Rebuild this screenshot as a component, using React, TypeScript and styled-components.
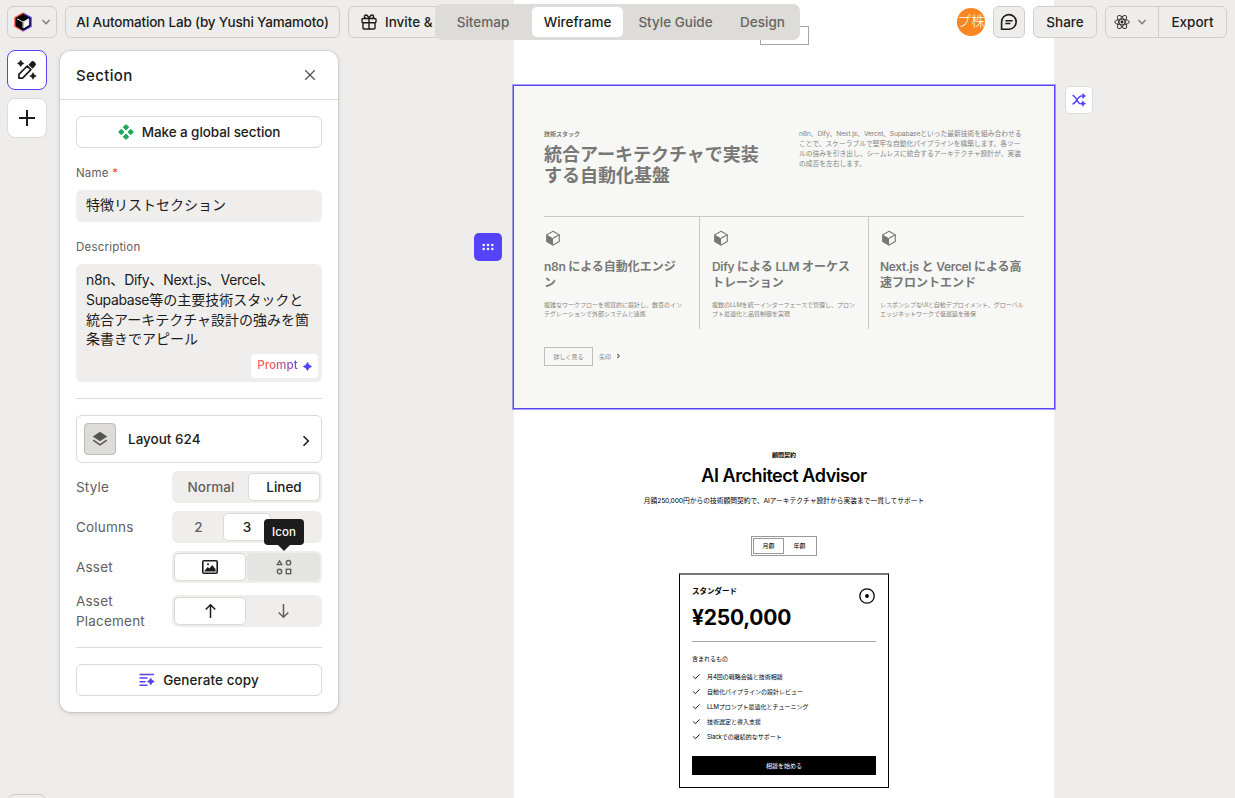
import React from "react";
import styled, { createGlobalStyle, css } from "styled-components";

const ui = `Inter, "Noto Sans CJK JP", sans-serif`;
const ink = "#1c1c1b";
const muted = "#61605e";
const accent = "#5443f8";
const canvasBg = "#eeedeb";

const GlobalStyle = createGlobalStyle`
  * { box-sizing: border-box; }
  body { margin: 0; overflow: hidden; background: ${canvasBg}; font-family: ${ui}; color: ${ink}; }
  button { font: inherit; color: inherit; margin: 0; padding: 0; background: none; border: 0; }
  h2, h3, p, ul { margin: 0; padding: 0; font-weight: inherit; font-size: inherit; }
  svg { display: block; flex: none; }
`;

const Shell = styled.div`
  position: relative;
  display: flex;
  width: 1235px;
  height: 798px;
  overflow: hidden;
  background: ${canvasBg};
`;

/* ---------- top bar ---------- */
const TopBar = styled.header`
  position: absolute;
  z-index: 5;
  inset: 0 0 auto 0;
  display: flex;
  align-items: center;
  gap: 8px;
  padding: 6px 8px 0 7px;
`;
const BarButton = styled.button<{ $w: number; $ls?: number }>`
  display: flex;
  align-items: center;
  justify-content: center;
  gap: 8px;
  width: ${(p) => p.$w}px;
  height: 32px;
  border: 1px solid #cfcecb;
  border-radius: 6px;
  background: ${canvasBg};
  font-size: 13.5px;
  font-weight: 500;
  letter-spacing: ${(p) => p.$ls ?? 0}px;
  white-space: nowrap;
`;
const InviteButton = styled(BarButton)`
  justify-content: flex-start;
  padding-left: 12px;
`;
const Spacer = styled.div`
  flex: 1;
`;
const Avatar = styled.div`
  display: flex;
  align-items: center;
  justify-content: center;
  width: 28px;
  height: 28px;
  border-radius: 50%;
  overflow: hidden;
  background: #f98620;
  color: #fff;
  font-size: 14px;
  font-weight: 300;
  line-height: 26px;
  padding-bottom: 2px;
  white-space: nowrap;
`;
const SplitButton = styled.div`
  display: flex;
  width: 122px;
  height: 32px;
  border: 1px solid #cfcecb;
  border-radius: 6px;
  background: ${canvasBg};
  font-size: 13.5px;
  font-weight: 500;
  letter-spacing: 0.1px;
`;
const SplitPart = styled.button<{ $w: number }>`
  display: flex;
  align-items: center;
  justify-content: center;
  gap: 7px;
  width: ${(p) => p.$w}px;
  padding-right: ${(p) => (p.$w < 60 ? 3 : 0)}px;
  & + & { border-left: 1px solid #cfcecb; }
`;
const Tabs = styled.nav`
  position: absolute;
  z-index: 6;
  left: 435px;
  top: 4px;
  display: flex;
  align-items: center;
  width: 365px;
  height: 36px;
  padding: 0 3px;
  border-radius: 7px;
  background: #dddcd8;
`;
const Tab = styled.button<{ $w: number; $active?: boolean; $shift?: number }>`
  width: ${(p) => p.$w}px;
  height: 30px;
  padding-right: ${(p) => p.$shift ?? 0}px;
  border-radius: 5px;
  font-size: 13.5px;
  font-weight: 500;
  color: ${(p) => (p.$active ? ink : "#666562")};
  background: ${(p) => (p.$active ? "#fff" : "transparent")};
`;

/* ---------- tool rail ---------- */
const Rail = styled.aside`
  display: flex;
  flex-direction: column;
  gap: 8px;
  width: 60px;
  height: 834px;
  padding: 50px 0 0 7px;
  flex: none;
`;
const RailButton = styled.button<{ $active?: boolean }>`
  display: flex;
  align-items: center;
  justify-content: center;
  width: 40px;
  height: 40px;
  border: 1px solid ${(p) => (p.$active ? accent : "#dcdbd9")};
  border-radius: 8px;
  background: #fff;
`;
const RailFooter = styled.button`
  width: 40px;
  height: 40px;
  margin-top: auto;
  border: 1px solid #cfcecb;
  border-radius: 8px;
`;

/* ---------- section panel ---------- */
const Panel = styled.section`
  align-self: flex-start;
  width: 278px;
  height: 661px;
  margin-top: 51px;
  flex: none;
  border-radius: 11px;
  background: #fff;
  box-shadow: 0 0 0 1px rgba(0, 0, 0, 0.06), 0 1px 5px rgba(0, 0, 0, 0.16);
`;
const PanelHead = styled.div`
  display: flex;
  align-items: center;
  justify-content: space-between;
  height: 49px;
  padding: 0 22px 0 16px;
  border-bottom: 1px solid #dcdbd9;
  font-size: 15px;
  font-weight: 500;
  letter-spacing: 0.35px;
`;
const PanelBody = styled.div`
  padding: 16px;
`;
const WideButton = styled.button<{ $ls?: number }>`
  display: flex;
  align-items: center;
  justify-content: center;
  gap: 8px;
  width: 100%;
  height: 32px;
  border: 1px solid #dad9d7;
  border-radius: 6px;
  font-size: 13.5px;
  font-weight: 500;
  letter-spacing: ${(p) => p.$ls ?? 0}px;
  white-space: nowrap;
`;
const FieldLabel = styled.div<{ $top: number }>`
  margin-top: ${(p) => p.$top}px;
  height: 18px;
  line-height: 19px;
  font-size: 11.5px;
  letter-spacing: 0.2px;
  color: ${muted};
`;
const Required = styled.span`
  color: #fb4b42;
`;
const TextField = styled.div`
  height: 32px;
  margin-top: 8px;
  padding: 0 10px;
  border-radius: 6px;
  background: #efeeec;
  font-size: 14px;
  line-height: 30px;
`;
const TextArea = styled.div`
  display: flex;
  flex-direction: column;
  justify-content: space-between;
  height: 118px;
  margin-top: 8px;
  padding: 6px 4px 4px 10px;
  border-radius: 6px;
  background: #efeeec;
  font-size: 14px;
  line-height: 19.8px;
  white-space: nowrap;
`;
const PromptButton = styled.button`
  display: flex;
  align-items: center;
  justify-content: center;
  align-self: flex-end;
  gap: 5px;
  width: 67px;
  height: 24px;
  border-radius: 4px;
  background: #fff;
  font-size: 11.7px;
  font-weight: 500;
`;
const PromptText = styled.span`
  background: linear-gradient(90deg, #ff6450 0%, #f0584f 35%, #6d45e6 100%);
  -webkit-background-clip: text;
  background-clip: text;
  color: transparent;
`;
const Rule = styled.div<{ $top: number }>`
  height: 1px;
  margin: ${(p) => p.$top}px 0 16px;
  background: #dcdbd9;
`;
const LayoutButton = styled.button`
  display: flex;
  align-items: center;
  width: 100%;
  height: 48px;
  padding: 0 11px 0 7px;
  border: 1px solid #dad9d7;
  border-radius: 6px;
  font-size: 13.5px;
  font-weight: 500;
`;
const LayoutThumb = styled.span`
  display: flex;
  align-items: center;
  justify-content: center;
  width: 32px;
  height: 32px;
  margin-right: 12px;
  border: 1px solid #bdbcb8;
  border-radius: 4px;
  background: #dddcd8;
`;
const ChevronSlot = styled.span`
  padding-top: 3px;
`;
const Option = styled.div`
  display: flex;
  align-items: center;
  justify-content: space-between;
  margin-top: 8px;
  font-size: 13.5px;
  line-height: 20px;
  letter-spacing: 0.2px;
  color: ${muted};
`;
const Segments = styled.div`
  display: flex;
  width: 150px;
  height: 32px;
  padding: 2px;
  border-radius: 6px;
  background: #efeeec;
`;
const Segment = styled.button<{ $w: number; $active?: boolean; $hover?: boolean }>`
  display: flex;
  align-items: center;
  justify-content: center;
  width: ${(p) => p.$w}px;
  height: 28px;
  border-radius: 5px;
  font-weight: 500;
  letter-spacing: 0;
  ${(p) => p.$active && css`
    color: ${ink};
    background: #fff;
    border: 1px solid #dad9d7;
  `}
  ${(p) => p.$hover && css`background: #e4e4e2;`}
`;
const HoverHost = styled.div`
  position: relative;
  display: flex;
  margin-left: 1px;
`;
const Tooltip = styled.div`
  position: absolute;
  z-index: 8;
  left: 17px;
  top: -34px;
  width: 40px;
  height: 26px;
  border-radius: 4px;
  background: #1d1d1d;
  color: #fff;
  font-size: 11.5px;
  font-weight: 500;
  line-height: 27px;
  letter-spacing: 0.1px;
  text-align: center;
  &::after {
    content: "";
    position: absolute;
    left: 14px;
    top: 26px;
    border: 6px solid transparent;
    border-top-color: #1d1d1d;
    border-bottom: 0;
  }
`;

/* ---------- canvas ---------- */
const Canvas = styled.main`
  width: 541px;
  margin-left: 176px;
  flex: none;
`;
const Sheet = styled.div`
  width: 540px;
  min-height: 798px;
  background: #fff;
`;
const PrevSection = styled.div`
  display: flex;
  justify-content: center;
  height: 86px;
`;
const GhostButton = styled.div`
  width: 49px;
  height: 19px;
  margin-top: 26px;
  border: 1px solid #a5a5a5;
`;
const Selected = styled.section`
  position: relative;
  height: 322px;
  padding: 42.6px 30px 0;
  background: #f7f7f5;
  color: #777775;
  box-shadow: 0 0 0 1px ${accent}, 0 0 0 2px rgba(84, 67, 248, 0.5);
`;
const IntroRow = styled.div`
  display: grid;
  grid-template-columns: 225px 225px;
  column-gap: 30px;
  height: 87.8px;
`;
const Latin = styled.span`
  letter-spacing: -0.025em;
`;
const Eyebrow = styled.p`
  font-size: 6px;
  line-height: 9px;
  font-weight: 600;
`;
const Heading = styled.h2`
  margin-top: 6px;
  font-size: 18px;
  line-height: 21.6px;
  font-weight: 600;
  white-space: nowrap;
`;
const Lead = styled.p`
  font-size: 6.75px;
  line-height: 10.125px;
  white-space: nowrap;
  color: #858583;
`;
const Features = styled.div`
  display: grid;
  grid-template-columns: 156px 169px 155px;
  height: 113px;
  border-top: 1px solid #c8c8c5;
`;
const Feature = styled.article`
  padding: 12px 0 0 12px;
  &:first-child { padding-left: 0; }
  &:last-child { padding-left: 11px; }
  &:not(:last-child) { border-right: 1px solid #c8c8c5; }
`;
const FeatureTitle = styled.h3`
  margin-top: 12px;
  font-size: 12px;
  line-height: 15.6px;
  font-weight: 600;
  white-space: nowrap;
`;
const FeatureText = styled.p`
  margin-top: 9px;
  font-size: 6px;
  line-height: 9px;
  white-space: nowrap;
  color: #858583;
`;
const Actions = styled.div`
  display: flex;
  align-items: center;
  gap: 6px;
  margin-top: 17.6px;
  font-size: 6px;
  color: #858583;
`;
const MoreButton = styled.div`
  width: 49px;
  height: 19px;
  border: 1px solid #bdbdbb;
  line-height: 17px;
  text-align: center;
`;
const DragHandle = styled.button`
  position: absolute;
  left: -40px;
  top: 147px;
  display: flex;
  align-items: center;
  justify-content: center;
  width: 28px;
  height: 28px;
  border-radius: 5px;
  background: ${accent};
`;
const ShuffleButton = styled.button`
  position: absolute;
  right: -39px;
  top: 0;
  display: flex;
  align-items: center;
  justify-content: center;
  width: 28px;
  height: 28px;
  border: 1px solid #dddcda;
  border-radius: 5px;
  background: #fff;
`;

const Pricing = styled.section`
  display: flex;
  flex-direction: column;
  align-items: center;
  padding-top: 42px;
  color: #000;
`;
const PricingTitle = styled(Heading)`
  margin-top: 6px;
  font-weight: 600;
  letter-spacing: -0.45px;
`;
const PricingLead = styled.p`
  margin-top: 9px;
  font-size: 6.75px;
  line-height: 10px;
  white-space: nowrap;
`;
const Period = styled.div`
  display: flex;
  width: 66px;
  height: 20px;
  margin-top: 30px;
  padding: 1px;
  border: 1px solid #999;
  font-size: 6px;
`;
const PeriodItem = styled.div<{ $active?: boolean }>`
  width: 31px;
  height: 16px;
  border: 1px solid ${(p) => (p.$active ? "#999" : "transparent")};
  line-height: 14px;
  text-align: center;
`;
const Card = styled.article`
  width: 210px;
  height: 215px;
  margin-top: 17.5px;
  padding: 10px 12px;
  border: 1px solid #000;
  border-top: 2px solid #777;
`;
const CardTop = styled.div`
  display: flex;
  justify-content: space-between;
  height: 57px;
  padding-top: 1px;
  border-bottom: 1px solid #a5a5a5;
`;
const Plan = styled.h3`
  font-size: 7.5px;
  line-height: 11px;
  font-weight: 700;
`;
const Price = styled.p`
  margin-top: 7px;
  font-size: 21px;
  line-height: 28px;
  font-weight: 700;
  letter-spacing: -0.25px;
`;
const Included = styled.p`
  margin-top: 12px;
  font-size: 6px;
  line-height: 9px;
`;
const List = styled.ul`
  display: grid;
  gap: 6px;
  margin-top: 9px;
  list-style: none;
`;
const Item = styled.li`
  display: flex;
  align-items: center;
  gap: 6px;
  height: 9px;
  font-size: 6px;
  line-height: 9px;
  white-space: nowrap;
`;
const Cta = styled.div`
  height: 19px;
  margin-top: 15px;
  background: #000;
  color: #fff;
  font-size: 6px;
  line-height: 19px;
  text-align: center;
`;

/* ---------- icons ---------- */
const Chevron = () => (
  <svg width="10" height="10" viewBox="0 0 10 10" fill="none" stroke="#777" strokeWidth="1.3">
    <path d="M1.500 3l3.500 3.700L8.500 3" />
  </svg>
);
const Logo = () => (
  <svg width="20" height="20" viewBox="0 0 20 20">
    <defs>
      <linearGradient id="rim" x1="0" y1="0" x2="1" y2="0.15">
        <stop offset="0.4" stopColor="#ff5a48" />
        <stop offset="0.75" stopColor="#5a43f5" />
      </linearGradient>
    </defs>
    <path d="M10 .3l8.800 5v9.400l-8.800 5-8.800-5V5.300z" fill="url(#rim)" />
    <path d="M10 2.200l7 4v7.700l-7 4-7-4V6.200z" fill="#000" stroke="#000" strokeLinejoin="round" />
    <path d="M10.500 10l5.700-3.200v6.300l-5.700 3.400z" fill="#f5f3f1" />
    <path d="M4 6.800L10 10l6-3.300M10 10v6" stroke="#f5f3f1" strokeWidth="0.900" fill="none" />
  </svg>
);
const Gift = () => (
  <svg width="16" height="16" viewBox="0 0 16 16" fill="none" stroke={ink} strokeWidth="1.400">
    <rect x="1" y="4.500" width="14" height="4.300" rx="1" />
    <path d="M2 8.800v5.200q0 1 1 1h10q1 0 1-1V8.800M8 4.500V15" />
    <path d="M8 4.500C7 1.700 6.200 1 4.900 1 2.900 1 2.900 4.300 5 4.500M8 4.500C9 1.700 9.800 1 11.100 1c2 0 2 3.300-.1 3.500" />
  </svg>
);
const Comment = () => (
  <svg width="18" height="18" viewBox="0 0 18 18" fill="none" stroke={ink} strokeWidth="1.600">
    <path d="M1.600 16.200V9A7.300 7.300 0 1 1 9 16.200z" />
    <path d="M5.400 7.700h7.200M5.400 10.500h5" strokeWidth="1.400" />
  </svg>
);
const Atom = () => (
  <svg width="16" height="16" viewBox="0 0 16 16" fill="none" stroke="#3a3a39" strokeWidth="1">
    <ellipse cx="8" cy="8" rx="7.300" ry="2.800" />
    <ellipse cx="8" cy="8" rx="7.300" ry="2.800" transform="rotate(60 8 8)" />
    <ellipse cx="8" cy="8" rx="7.300" ry="2.800" transform="rotate(120 8 8)" />
    <circle cx="8" cy="8" r="1.400" fill="#222" stroke="none" />
  </svg>
);
const star = (x: number, y: number, r: number) =>
  `M${x} ${y - r}Q${x + r * 0.22} ${y - r * 0.22} ${x + r} ${y}Q${x + r * 0.22} ${y + r * 0.22} ${x} ${y + r}Q${x - r * 0.22} ${y + r * 0.22} ${x - r} ${y}Q${x - r * 0.22} ${y - r * 0.22} ${x} ${y - r}z`;
const MagicPen = () => (
  <svg width="20" height="20" viewBox="0 0 20 20">
    <path d="M1.900 18.100v-3.800l8.300-8.300 3.700 3.700-8.300 8.400z" fill="none" stroke={ink} strokeWidth="1.700" strokeLinejoin="round" />
    <path d="M11.500 4.700l2.600-2.900q1.600-1.600 3.200-.1l1 1q1.500 1.600 0 3.100l-2.800 2.900z" fill={ink} />
    <path d={star(3.7, 3.4, 3.4)} fill={ink} stroke={ink} strokeWidth="0.400" />
    <path d={star(16, 15.9, 3.5)} fill={ink} stroke={ink} strokeWidth="0.400" />
  </svg>
);
const Plus = () => (
  <svg width="16" height="16" viewBox="0 0 16 16" stroke={ink} strokeWidth="2">
    <path d="M8 0v16M0 8h16" />
  </svg>
);
const Close = () => (
  <svg width="12" height="12" viewBox="0 0 12 12" stroke="#555" strokeWidth="1.300">
    <path d="M1.200 1.200l9.600 9.600M10.800 1.200l-9.600 9.600" />
  </svg>
);
const Diamonds = () => (
  <svg width="16" height="16" viewBox="0 0 16 16" fill="#1ba85c" stroke="#1ba85c" strokeWidth="1.400" strokeLinejoin="round">
    <path d="M8 1l2.300 2.300L8 5.600 5.700 3.300zM8 10.400l2.300 2.300L8 15l-2.300-2.300zM3.300 5.700L5.600 8l-2.300 2.300L1 8zM12.700 5.700L15 8l-2.300 2.300L10.400 8z" />
  </svg>
);
const Spark = () => (
  <svg width="9" height="9" viewBox="0 0 10 10">
    <path d={star(5, 5, 4.5)} fill={accent} stroke={accent} strokeWidth="0.900" />
  </svg>
);
const Layers = () => (
  <svg width="16" height="16" viewBox="0 0 16 16">
    <path d="M8 .8l7.200 4.700L8 10.200.8 5.500z" fill="#555553" />
    <path d="M1.200 9.200L8 13.800l6.800-4.600" fill="none" stroke="#555553" strokeWidth="1.500" />
  </svg>
);
const ChevronRight = () => (
  <svg width="8" height="12" viewBox="0 0 8 12" fill="none" stroke={ink} strokeWidth="1.600">
    <path d="M1.500 1.200L6.300 6 1.500 10.800" />
  </svg>
);
const ImageIcon = () => (
  <svg width="16" height="14" viewBox="0 0 16 14">
    <rect x=".8" y=".8" width="14.400" height="12.400" rx="1" fill="none" stroke={ink} strokeWidth="1.600" />
    <path d="M2.500 11.500v-.8l3.200-3.600 1.600 1.500 3-3.600 3.300 4.300v2.200z" fill={ink} />
    <circle cx="6" cy="4.300" r="1" fill={ink} />
  </svg>
);
const Shapes = () => (
  <svg width="16" height="16" viewBox="0 0 16 16" fill="none" stroke={muted} strokeWidth="1.400">
    <path d="M3.500 1.800L5.700 5.600H1.300z" />
    <circle cx="12.500" cy="3.700" r="2.200" />
    <circle cx="3.500" cy="12.500" r="2.200" />
    <rect x="10.300" y="10.300" width="4.400" height="4.400" />
  </svg>
);
const Arrow = ({ down }: { down?: boolean }) => (
  <svg width="12" height="16" viewBox="0 0 12 16" fill="none" stroke={down ? muted : ink} strokeWidth="1.500">
    <path d={down ? "M6.500 1v13.200M1.700 9.500L6.500 14.300l4.800-4.800" : "M6.500 15V1.800M1.700 6.500L6.500 1.700l4.800 4.800"} />
  </svg>
);
const CopyLines = () => (
  <svg width="16" height="14" viewBox="0 0 16 14">
    <path d="M.5 1.500h14.500M.5 5h8M.5 8.700h6M.5 12.300h8" stroke={accent} strokeWidth="1.500" />
    <path d={star(11.8, 8.5, 3.5)} fill={accent} stroke={accent} strokeWidth="0.600" />
  </svg>
);
const Shuffle = () => (
  <svg width="14" height="14" viewBox="0 0 14 14" fill="none" stroke={accent} strokeWidth="1.400">
    <path d="M.5 2.500c4 0 4.500 8.200 8 8.200M.5 11c4 0 4.500-8 9-8h3M10.400.700l2.400 2.300-2.400 2.300" />
    <path d={star(10.9, 10.6, 2.9)} fill={accent} strokeWidth="0.400" />
  </svg>
);
const Dots = () => (
  <svg width="12" height="8" viewBox="0 0 12 8" fill="#fff">
    {[1.7, 6, 10.3].map((x) => [2, 6].map((y) => <circle key={`${x}-${y}`} cx={x} cy={y} r="1.250" />))}
  </svg>
);
const Cube = () => (
  <svg width="18" height="18" viewBox="0 0 18 18">
    <path d="M9 2.300l6.300 3.500v6.600L9 16l-6.300-3.600V5.800z" fill="none" stroke="#777775" strokeWidth="1.100" />
    <path d="M2.700 5.800L9 9.300V16l-6.300-3.600z" fill="#777775" />
    <path d="M9 9.300l6.300-3.500" stroke="#777775" strokeWidth="1.100" />
  </svg>
);
const Target = () => (
  <svg width="18" height="20" viewBox="0 0 18 20">
    <circle cx="9" cy="10" r="7.200" fill="none" stroke="#000" strokeWidth="1.300" />
    <circle cx="9" cy="10" r="1.900" fill="#000" />
  </svg>
);
const Check = () => (
  <svg width="9" height="9" viewBox="0 0 9 9" fill="none" stroke="#000" strokeWidth="0.900">
    <path d="M1.200 4.500l2.200 2.200 4.300-4.300" />
  </svg>
);

const features = [
  { title: ["n8n による自動化エンジ", "ン"], text: ["複雑なワークフローを視覚的に設計し、数百のイン", "テグレーションで外部システムと連携"] },
  { title: ["Dify による LLM オーケス", "トレーション"], text: ["複数のLLMを統一インターフェースで管理し、プロン", "プト最適化と品質制御を実現"] },
  { title: ["Next.js と Vercel による高", "速フロントエンド"], text: ["レスポンシブなUIと自動デプロイメント、グローバル", "エッジネットワークで低遅延を確保"] },
];
const included = [
  "月4回の戦略会議と技術相談",
  "自動化パイプラインの設計レビュー",
  "LLMプロンプト最適化とチューニング",
  "技術選定と導入支援",
  "Slackでの継続的なサポート",
];

/* Latin runs are tracked a little tighter than the Japanese around them. */
const Mixed = ({ text }: { text: string }) => (
  <>
    {text.split(/([ -~]+)/).map((run, i) => (i % 2 ? <Latin key={i}>{run}</Latin> : run))}
  </>
);
const Lines = ({ of }: { of: string[] }) => (
  <>
    {of.map((line, i) => (
      <React.Fragment key={line}>
        {i > 0 && <br />}
        <Mixed text={line} />
      </React.Fragment>
    ))}
  </>
);

export default function App() {
  return (
    <Shell>
      <GlobalStyle />
      <TopBar>
        <BarButton $w={50}><Logo /><Chevron /></BarButton>
        <BarButton $w={275} $ls={-0.18}>AI Automation Lab (by Yushi Yamamoto)</BarButton>
        <InviteButton $w={130}><Gift />Invite &amp;</InviteButton>
        <Spacer />
        <Avatar>プ株</Avatar>
        <BarButton $w={32}><Comment /></BarButton>
        <BarButton $w={64}>Share</BarButton>
        <SplitButton>
          <SplitPart $w={52}><Atom /><Chevron /></SplitPart>
          <SplitPart $w={68}>Export</SplitPart>
        </SplitButton>
      </TopBar>
      <Tabs>
        <Tab $w={94} $shift={4}>Sitemap</Tab>
        <Tab $w={91} $active>Wireframe</Tab>
        <Tab $w={105}>Style Guide</Tab>
        <Tab $w={69}>Design</Tab>
      </Tabs>

      <Rail>
        <RailButton $active><MagicPen /></RailButton>
        <RailButton><Plus /></RailButton>
        <RailFooter />
      </Rail>

      <Panel>
        <PanelHead>Section<Close /></PanelHead>
        <PanelBody>
          <WideButton $ls={-0.08}><Diamonds />Make a global section</WideButton>
          <FieldLabel $top={16}>Name <Required>*</Required></FieldLabel>
          <TextField>特徴リストセクション</TextField>
          <FieldLabel $top={16}>Description</FieldLabel>
          <TextArea>
            <p>
              <Lines of={["n8n、Dify、Next.js、Vercel、", "Supabase等の主要技術スタックと", "統合アーキテクチャ設計の強みを箇", "条書きでアピール"]} />
            </p>
            <PromptButton><PromptText>Prompt</PromptText><Spark /></PromptButton>
          </TextArea>
          <Rule $top={16} />
          <LayoutButton>
            <LayoutThumb><Layers /></LayoutThumb>
            Layout 624
            <Spacer />
            <ChevronSlot><ChevronRight /></ChevronSlot>
          </LayoutButton>
          <Option>
            Style
            <Segments>
              <Segment $w={74}>Normal</Segment>
              <Segment $w={72} $active>Lined</Segment>
            </Segments>
          </Option>
          <Option>
            Columns
            <Segments>
              <Segment $w={49}>2</Segment>
              <Segment $w={48} $active>3</Segment>
            </Segments>
          </Option>
          <Option>
            Asset
            <Segments>
              <Segment $w={72} $active><ImageIcon /></Segment>
              <HoverHost>
                <Segment $w={73} $hover><Shapes /></Segment>
                <Tooltip>Icon</Tooltip>
              </HoverHost>
            </Segments>
          </Option>
          <Option>
            <span>Asset<br />Placement</span>
            <Segments>
              <Segment $w={72} $active><Arrow /></Segment>
              <Segment $w={74}><Arrow down /></Segment>
            </Segments>
          </Option>
          <Rule $top={16} />
          <WideButton $ls={0.08}><CopyLines />Generate copy</WideButton>
        </PanelBody>
      </Panel>

      <Canvas>
        <Sheet>
          <PrevSection><GhostButton /></PrevSection>
          <Selected>
            <IntroRow>
              <div>
                <Eyebrow>技術スタック</Eyebrow>
                <Heading><Lines of={["統合アーキテクチャで実装", "する自動化基盤"]} /></Heading>
              </div>
              <Lead>
                <Lines of={[
                  "n8n、Dify、Next.js、Vercel、Supabaseといった最新技術を組み合わせる",
                  "ことで、スケーラブルで堅牢な自動化パイプラインを構築します。各ツー",
                  "ルの強みを引き出し、シームレスに統合するアーキテクチャ設計が、実装",
                  "の成否を左右します。",
                ]} />
              </Lead>
            </IntroRow>
            <Features>
              {features.map((f) => (
                <Feature key={f.title[0]}>
                  <Cube />
                  <FeatureTitle><Lines of={f.title} /></FeatureTitle>
                  <FeatureText><Lines of={f.text} /></FeatureText>
                </Feature>
              ))}
            </Features>
            <Actions>
              <MoreButton>詳しく見る</MoreButton>
              矢印
              <svg width="3" height="6" viewBox="1 0 3 6" fill="none" stroke="#666664" strokeWidth="1.100">
                <path d="M1.300 1l2 2-2 2" />
              </svg>
            </Actions>
            <DragHandle><Dots /></DragHandle>
            <ShuffleButton><Shuffle /></ShuffleButton>
          </Selected>
          <Pricing>
            <Eyebrow>顧問契約</Eyebrow>
            <PricingTitle>AI Architect Advisor</PricingTitle>
            <PricingLead>
              <Mixed text="月額250,000円からの技術顧問契約で、AIアーキテクチャ設計から実装まで一貫してサポート" />
            </PricingLead>
            <Period>
              <PeriodItem $active>月額</PeriodItem>
              <PeriodItem>年額</PeriodItem>
            </Period>
            <Card>
              <CardTop>
                <div>
                  <Plan>スタンダード</Plan>
                  <Price>¥250,000</Price>
                </div>
                <Target />
              </CardTop>
              <Included>含まれるもの</Included>
              <List>
                {included.map((text) => (
                  <Item key={text}><Check /><span><Mixed text={text} /></span></Item>
                ))}
              </List>
              <Cta>相談を始める</Cta>
            </Card>
          </Pricing>
        </Sheet>
      </Canvas>
    </Shell>
  );
}
